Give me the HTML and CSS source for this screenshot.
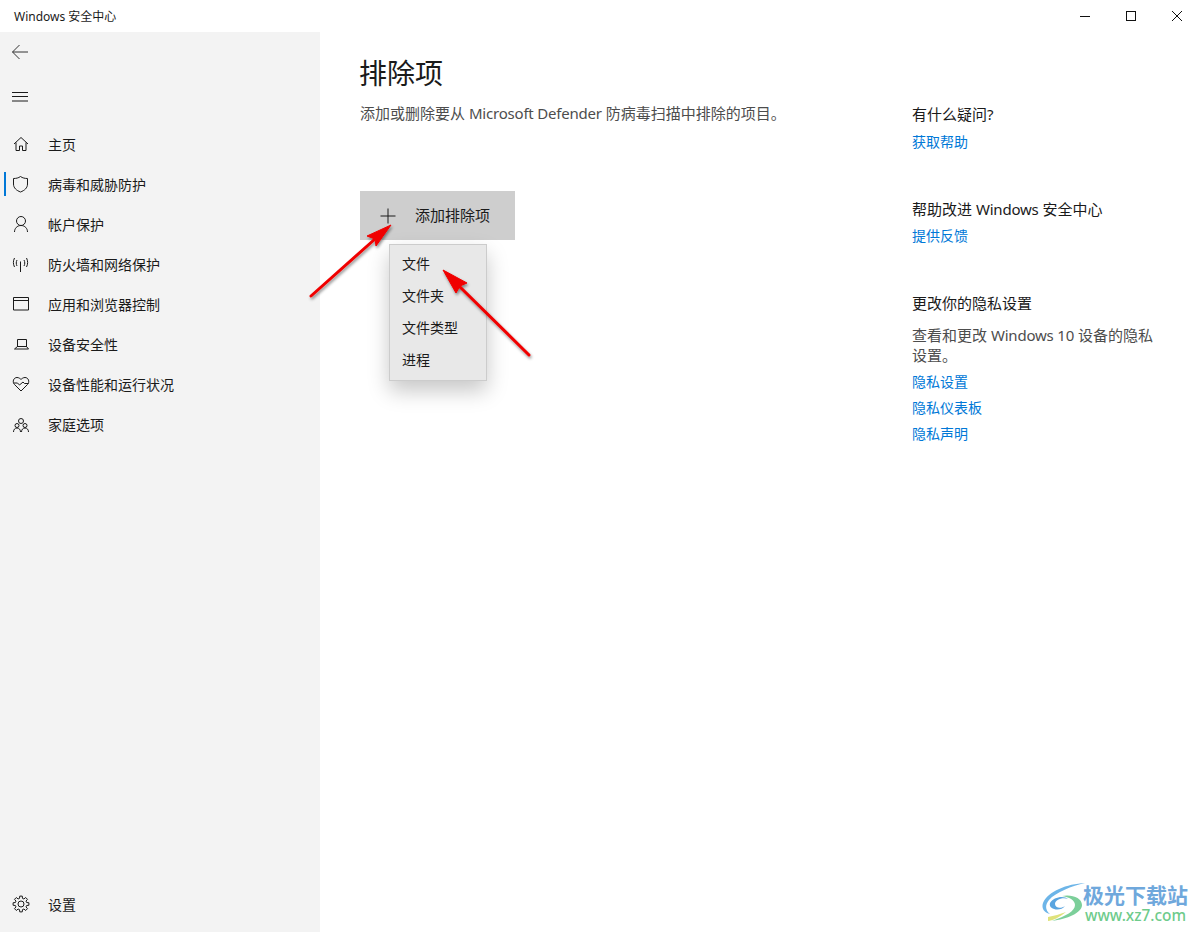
FILE: index.html
```html
<!DOCTYPE html>
<html lang="zh-CN">
<head>
    <meta charset="UTF-8">
    <meta name="viewport" content="width=device-width, initial-scale=1.0">
    <title>Windows 安全中心</title>
    <link rel="stylesheet" href="styles.css">
</head>
<body>
    <div class="window">
        <header class="titlebar">
            <span class="app-name">Windows 安全中心</span>
            <div class="window-controls">
                <svg class="win-icon" viewBox="0 0 46 32"><path d="M18 16.500h10"/></svg>
                <svg class="win-icon" viewBox="0 0 46 32"><rect x="18.500" y="11.500" width="9" height="9"/></svg>
                <svg class="win-icon" viewBox="0 0 46 32"><path d="M18 11l10 10M28 11l-10 10"/></svg>
            </div>
        </header>

        <div class="content">
            <aside class="sidebar">
                <div class="sidebar-tool">
                    <svg class="nav-icon back" viewBox="0 0 20 20"><path d="M2.500 10H18M9.500 3l-7 7 7 7"/></svg>
                </div>
                <div class="sidebar-tool">
                    <svg class="nav-icon" viewBox="0 0 20 20"><path d="M2 6.500h16M2 10.500h16M2 15h16"/></svg>
                </div>
                <nav class="nav-list">
                    <a class="nav-item">
                        <svg class="nav-icon" viewBox="0 0 20 20"><path d="M4 9l7-6.500L18 9M6 7.500v8h3.500V11h3v4.500H16v-8"/></svg>
                        <span>主页</span>
                    </a>
                    <a class="nav-item active">
                        <svg class="nav-icon" viewBox="0 0 20 20"><path d="M10.500 1.500c2 1.500 4.500 2 7 2V9c0 4-3 6.500-7 8-4-1.500-7-4-7-8V3.500c2.500 0 5-.5 7-2z"/></svg>
                        <span>病毒和威胁防护</span>
                    </a>
                    <a class="nav-item">
                        <svg class="nav-icon" viewBox="0 0 20 20"><circle cx="11" cy="6" r="4.500"/><path d="M4.500 17c0-3.500 2.500-6.500 6.500-6.500s6.500 3 6.500 6.500"/></svg>
                        <span>帐户保护</span>
                    </a>
                    <a class="nav-item">
                        <svg class="nav-icon" viewBox="0 0 20 20"><path d="M10.500 6.500V17M7 5c-1 2-1 4 0 6M14 5c1 2 1 4 0 6M4.500 3C3 6 3 9 4.500 12M16.500 3c1.500 3 1.500 6 0 9"/></svg>
                        <span>防火墙和网络保护</span>
                    </a>
                    <a class="nav-item">
                        <svg class="nav-icon" viewBox="0 0 20 20"><path d="M3.500 2.500h15V15h-15zM3.500 5.500h15"/></svg>
                        <span>应用和浏览器控制</span>
                    </a>
                    <a class="nav-item">
                        <svg class="nav-icon" viewBox="0 0 20 20"><path d="M7.500 12V4.500h9V12M7.500 11.500l-3 2.500h14l-2-2.500z"/></svg>
                        <span>设备安全性</span>
                    </a>
                    <a class="nav-item">
                        <svg class="nav-icon" viewBox="0 0 20 20"><path d="M11 16L4.500 9.500C2 7 3.500 2.500 7 2.500c1.800 0 3 1 4 2 1-1 2.200-2 4-2 3.500 0 5 4.500 2.500 7zM3.500 8h4l2 2 3.500-3 1.500 1.500h4"/></svg>
                        <span>设备性能和运行状况</span>
                    </a>
                    <a class="nav-item">
                        <svg class="nav-icon" viewBox="0 0 20 20"><circle cx="11" cy="6" r="2.500"/><circle cx="7" cy="10.500" r="2"/><circle cx="15" cy="10.500" r="2"/><path d="M3.500 17c0-2.500 1.500-4 3.500-4s3.500 1.500 3.500 4M11.500 17c0-2.500 1.500-4 3.500-4s3.500 1.500 3.500 4"/></svg>
                        <span>家庭选项</span>
                    </a>
                </nav>
                <a class="nav-item">
                    <svg class="nav-icon" viewBox="0 0 20 20"><circle cx="11" cy="9" r="3"/><path d="M16.600 7.500l2.300.25v2.500l-2.300.25-.58 1.400 1.450 1.800-1.770 1.770-1.800-1.450-1.400.58-.25 2.300h-2.500l-.25-2.300-1.400-.58-1.800 1.450-1.770-1.770 1.450-1.800-.58-1.400-2.300-.25v-2.500l2.300-.25.58-1.400-1.450-1.800 1.770-1.770 1.800 1.450 1.400-.58.25-2.300h2.500l.25 2.300 1.400.58 1.800-1.450 1.770 1.770-1.450 1.800z"/></svg>
                    <span>设置</span>
                </a>
            </aside>

            <main class="main">
                <section class="exclusions">
                    <h1>排除项</h1>
                    <p class="intro">添加或删除要从 <span class="latin">Microsoft Defender</span> 防病毒扫描中排除的项目。</p>
                    <button class="add-btn" type="button">
                        <svg class="plus" viewBox="0 0 16 16"><path d="M8 .5v15M.5 8h15"/></svg>
                        <span>添加排除项</span>
                    </button>
                </section>

                <aside class="help">
                    <div class="help-block">
                        <h2>有什么疑问?</h2>
                        <a>获取帮助</a>
                    </div>
                    <div class="help-block">
                        <h2>帮助改进 <span class="latin">Windows</span> 安全中心</h2>
                        <a>提供反馈</a>
                    </div>
                    <div class="help-block">
                        <h2>更改你的隐私设置</h2>
                        <p>查看和更改 <span class="latin">Windows 10</span> 设备的隐私设置。</p>
                        <a>隐私设置</a>
                        <a>隐私仪表板</a>
                        <a>隐私声明</a>
                    </div>
                </aside>
            </main>
        </div>

        <!-- menu opened from the add button -->
        <ul class="flyout">
            <li>文件</li>
            <li>文件夹</li>
            <li>文件类型</li>
            <li>进程</li>
        </ul>

        <!-- red annotation arrows -->
        <svg class="arrows" viewBox="0 0 1200 932">
            <defs>
                <filter id="arrow-shadow" x="-20%" y="-20%" width="140%" height="140%">
                    <feDropShadow dx="1" dy="2" stdDeviation="1.500" flood-color="#000" flood-opacity=".45"/>
                </filter>
            </defs>
            <g filter="url(#arrow-shadow)">
                <path class="arrow-line" d="M311 296L375 239"/>
                <path class="arrow-head" d="M391 225L367 236 375 239 376 246z"/>
                <path class="arrow-line" d="M529 355L459 286"/>
                <path class="arrow-head" d="M443 270L467 283 460 286 456 293z"/>
            </g>
        </svg>

        <div class="watermark">
            <svg class="wm-logo" viewBox="0 0 43 39">
                <path d="M43 0C25 1 6 8 1 20c-2 6 2 10 7 11-5-4-5-9-1-14C14 9 30 3 43 0z" fill="#6db5e8"/>
                <path d="M6 34c6-1 12-3 18-5-6 5-14 9-18 9z" fill="#dfe27a"/>
                <path d="M20 13c10-2 20 2 20 9 0 8-15 14-30 16 14-5 23-10 23-16 0-5-6-8-13-9z" fill="#7ccf9a"/>
                <path d="M8 20c3-6 14-8 18-4-6-2-13 1-13 5s6 5 10 2c-4 6-17 4-15-3z" fill="#5aa5e0"/>
            </svg>
            <div class="wm-text">
                <span class="wm-name">极光下载站</span>
                <span class="wm-url">www.xz7.com</span>
            </div>
        </div>
    </div>
</body>
</html>
```

FILE: styles.css
```css
* {
    box-sizing: border-box;
}
html, body {
    margin: 0;
    height: 100%;
}
body {
    font-family: "Noto Sans", "Noto Sans CJK SC", sans-serif;
    font-size: 14px;
    color: #1a1a1a;
    background-color: #fff;
    overflow: hidden;
}
.latin {
    letter-spacing: -0.2px;
}
.window {
    position: relative;
    width: 1200px;
    height: 932px;
    display: flex;
    flex-direction: column;
}
.titlebar {
    height: 32px;
    display: flex;
    align-items: center;
    justify-content: space-between;
    padding-left: 14px;
    background-color: #fff;
}
.app-name {
    font-size: 12px;
}
.window-controls {
    display: flex;
}
.win-icon {
    width: 46px;
    height: 32px;
    fill: none;
    stroke: #111;
    stroke-width: 1;
}
.content {
    flex: 1;
    display: flex;
    min-height: 0;
}
.sidebar {
    width: 320px;
    background-color: #f3f3f3;
    display: flex;
    flex-direction: column;
    padding-bottom: 7px;
}
.sidebar-tool {
    height: 44px;
    padding: 10px 0 0 10px;
}
.nav-list {
    flex: 1;
    padding-top: 5px;
}
.nav-item {
    position: relative;
    height: 40px;
    display: flex;
    align-items: center;
    padding-left: 10px;
    gap: 18px;
    white-space: nowrap;
}
.nav-item span {
    padding-bottom: 2px;
}
.nav-item.active::before {
    content: "";
    position: absolute;
    left: 4px;
    top: 7px;
    width: 2px;
    height: 24px;
    background-color: #0078d7;
}
.nav-icon {
    display: block;
    width: 20px;
    height: 20px;
    flex: none;
    fill: none;
    stroke: #1a1a1a;
    stroke-width: 1;
}
.nav-icon.back {
    stroke: #333;
}
.main {
    flex: 1;
    display: flex;
    padding-left: 40px;
}
.exclusions {
    width: 552px;
}
h1 {
    margin: 21px 0 0 -1px;
    font-size: 28px;
    font-weight: 400;
    line-height: 40px;
}
.intro {
    margin: 10px 0 0;
    font-size: 15px;
    line-height: 20px;
    color: #4d4d4d;
}
.add-btn {
    display: flex;
    align-items: center;
    width: 155px;
    height: 49px;
    margin-top: 68px;
    padding: 0 0 0 20px;
    border: none;
    background-color: #cecece;
    font: inherit;
    font-size: 15px;
    color: #1a1a1a;
}
.add-btn span {
    padding-bottom: 2px;
}
.plus {
    width: 16px;
    height: 16px;
    margin-right: 19px;
    fill: none;
    stroke: #1a1a1a;
    stroke-width: 1;
}
.help {
    width: 248px;
    padding-top: 72px;
}
.help-block {
    margin-bottom: 42px;
}
.help h2 {
    margin: 0 0 5px;
    font-size: 15px;
    font-weight: 400;
    line-height: 21px;
}
.help-block:first-child h2 {
    margin-bottom: 6px;
}
.help-block h2 + p {
    margin-top: 11px;
}
.help p {
    margin: 0 0 6px;
    font-size: 15px;
    line-height: 20px;
    color: #4d4d4d;
}
.help a {
    display: block;
    height: 26px;
    line-height: 21px;
    color: #0078d7;
}
.flyout {
    position: absolute;
    left: 389px;
    top: 244px;
    width: 98px;
    height: 137px;
    margin: 0;
    padding: 3px 0 0;
    list-style: none;
    background-color: #e8e8e8;
    border: 1px solid #ccc;
    box-shadow: 0 10px 20px rgba(0,0,0,0.22);
}
.flyout li {
    height: 32px;
    line-height: 32px;
    padding-left: 12px;
}
.arrows {
    position: absolute;
    left: 0;
    top: 0;
    width: 1200px;
    height: 932px;
    pointer-events: none;
}
.arrow-line {
    fill: none;
    stroke: #f00000;
    stroke-width: 3;
    stroke-linecap: round;
}
.arrow-head {
    fill: #f00000;
    stroke: #f00000;
    stroke-width: 1;
}
.watermark {
    position: absolute;
    left: 1042px;
    top: 883px;
    display: flex;
}
.wm-logo {
    width: 43px;
    height: 39px;
    flex: none;
}
.wm-text {
    display: flex;
    flex-direction: column;
    margin-left: -2px;
}
.wm-name {
    font-size: 21px;
    font-weight: 700;
    line-height: 24px;
    color: #6fa8dc;
    white-space: nowrap;
}
.wm-url {
    margin-left: 2px;
    font-size: 15.4px;
    line-height: 17px;
    color: #6ecb8b;
    font-weight: 500;
}
```
